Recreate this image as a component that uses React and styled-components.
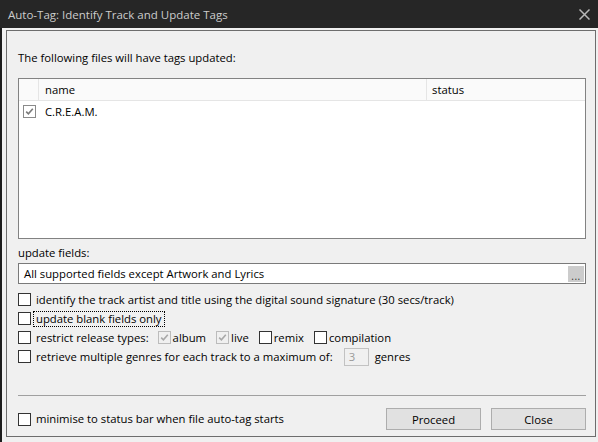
import { createGlobalStyle, styled } from "styled-components";

const GlobalStyle = createGlobalStyle`
  html, body {
    margin: 0;
    padding: 0;
    background: #f0f0f0;
  }
  body {
    font-family: "Open Sans", "Noto Sans", sans-serif;
    font-size: 11.3px;
    color: #000;
  }
  * {
    box-sizing: border-box;
  }
`;

const Check = ({ checked, variant }) => (
  <Box $variant={variant}>
    {checked && (
      <svg width="11" height="11" viewBox="0 0 11 11">
        <path
          d="M2.2 5.6 L4.4 7.8 L8.8 2.8"
          fill="none"
          stroke={variant === "disabled" ? "#a8a8a8" : "#7a7a7a"}
          strokeWidth="1.6"
        />
      </svg>
    )}
  </Box>
);

const App = () => {
  return (
    <Window>
      <GlobalStyle />
      <TitleBar>
        <span>Auto-Tag: Identify Track and Update Tags</span>
        <svg width="11" height="11" viewBox="0 0 11 11">
          <path d="M0.5 0.5 L10.5 10.5 M10.5 0.5 L0.5 10.5" stroke="#b8b8b8" strokeWidth="1.5" />
        </svg>
      </TitleBar>
      <Body>
        <Frame>
          <Heading>The following files will have tags updated:</Heading>
          <FileList>
            <HeaderRow>
              <HeadCell />
              <HeadCell>name</HeadCell>
              <HeadCell $last>status</HeadCell>
            </HeaderRow>
            <FileRow>
              <CheckCell>
                <Check checked variant="list" />
              </CheckCell>
              <span>C.R.E.A.M.</span>
            </FileRow>
          </FileList>
          <FieldLabel>update fields:</FieldLabel>
          <FieldBox>
            <span>All supported fields except Artwork and Lyrics</span>
            <DotsButton>...</DotsButton>
          </FieldBox>
          <Options>
            <OptionRow>
              <Check />
              <Label>identify the track artist and title using the digital sound signature (30 secs/track)</Label>
            </OptionRow>
            <OptionRow>
              <Check />
              <Label $focus>update blank fields only</Label>
            </OptionRow>
            <OptionRow>
              <Check />
              <Label>restrict release types:</Label>
              <TypeGroup>
                <Check checked variant="disabled" />
                <span>album</span>
              </TypeGroup>
              <TypeGroup>
                <Check checked variant="disabled" />
                <span>live</span>
              </TypeGroup>
              <TypeGroup>
                <Check />
                <span>remix</span>
              </TypeGroup>
              <TypeGroup>
                <Check />
                <span>compilation</span>
              </TypeGroup>
            </OptionRow>
            <OptionRow>
              <Check />
              <Label>retrieve multiple genres for each track to a maximum of:</Label>
              <NumberBox>3</NumberBox>
              <span>genres</span>
            </OptionRow>
          </Options>
          <Footer>
            <Separator />
            <FooterRow>
              <OptionRow>
                <Check />
                <Label>minimise to status bar when file auto-tag starts</Label>
              </OptionRow>
              <Buttons>
                <Button>Proceed</Button>
                <Button>Close</Button>
              </Buttons>
            </FooterRow>
          </Footer>
        </Frame>
      </Body>
    </Window>
  );
};

export default App;

const Window = styled.div`
  width: 598px;
  height: 442px;
  display: flex;
  flex-direction: column;
  background: #f0f0f0;
  overflow: hidden;
`;

const TitleBar = styled.div`
  height: 28px;
  flex: none;
  background: #262626;
  color: #cccccc;
  font-size: 11.5px;
  display: flex;
  align-items: center;
  justify-content: space-between;
  padding: 0 8px;
`;

const Body = styled.div`
  flex: 1;
  display: flex;
  border-left: 2px solid #1c1c1c;
  padding: 2px 2px 5px 4px;
`;

const Frame = styled.div`
  flex: 1;
  display: flex;
  flex-direction: column;
  border: 1px solid #6d6d6d;
  padding: 18px 9px 6px 11px;
`;

const Heading = styled.div`
  line-height: 17px;
`;

const FileList = styled.div`
  margin-top: 12px;
  height: 161px;
  border: 1px solid #828282;
  background: #fff;
  display: flex;
  flex-direction: column;
`;

const HeaderRow = styled.div`
  display: grid;
  grid-template-columns: 20px 388px 1fr;
  height: 22px;
  background: #fafafa;
  border-bottom: 1px solid #e5e5e5;
`;

const HeadCell = styled.div`
  display: flex;
  align-items: center;
  padding-left: ${(p) => (p.$last ? "5px" : "6px")};
  border-right: ${(p) => (p.$last ? "none" : "1px solid #e5e5e5")};
`;

const FileRow = styled.div`
  display: flex;
  align-items: center;
  height: 21px;
`;

const CheckCell = styled.div`
  width: 26px;
  padding-left: 4px;
  display: flex;
  align-items: center;
`;

const Box = styled.span`
  flex: none;
  width: 13px;
  height: 13px;
  display: inline-flex;
  align-items: center;
  justify-content: center;
  background: ${(p) => (p.$variant === "disabled" ? "#f0f0f0" : "#fff")};
  border: 1px solid
    ${(p) =>
      p.$variant === "disabled" ? "#bcbcbc" : p.$variant === "list" ? "#8a8a8a" : "#333"};
`;

const FieldLabel = styled.div`
  margin-top: 6px;
  line-height: 16px;
`;

const FieldBox = styled.div`
  margin-top: 2px;
  height: 21px;
  border: 1px solid #7a7a7a;
  background: #fff;
  display: flex;
  align-items: center;
  justify-content: space-between;
  padding: 0 1px 0 5px;
`;

const DotsButton = styled.span`
  width: 16px;
  height: 16px;
  background: #cccccc;
  color: #333;
  font-size: 10px;
  line-height: 12px;
  letter-spacing: 0.5px;
  display: flex;
  align-items: flex-end;
  justify-content: center;
`;

const Options = styled.div`
  margin-top: 6px;
  display: flex;
  flex-direction: column;
`;

const OptionRow = styled.div`
  display: flex;
  align-items: center;
  height: 19px;
  gap: 2px;
`;

const Label = styled.span`
  line-height: 14px;
  padding: 0 2px;
  margin-right: 4px;
  border: 1px ${(p) => (p.$focus ? "dotted #000" : "solid transparent")};
`;

const TypeGroup = styled.span`
  display: flex;
  align-items: center;
  gap: 2px;
  margin-right: 8px;
`;

const NumberBox = styled.span`
  width: 25px;
  height: 18px;
  margin-left: 2px;
  margin-right: 4px;
  border: 1px solid #c2c2c2;
  color: #9a9a9a;
  padding-left: 4px;
  line-height: 16px;
`;

const Footer = styled.div`
  margin-top: auto;
  display: flex;
  flex-direction: column;
`;

const Separator = styled.div`
  height: 1px;
  background: #a0a0a0;
  margin-bottom: 12px;
`;

const FooterRow = styled.div`
  display: flex;
  align-items: center;
  justify-content: space-between;
  height: 22px;
`;

const Buttons = styled.div`
  display: flex;
  gap: 10px;
`;

const Button = styled.button`
  width: 95px;
  height: 22px;
  background: #e1e1e1;
  border: 1px solid #adadad;
  font-family: inherit;
  font-size: 11.3px;
  color: #000;
  padding: 0;
`;
